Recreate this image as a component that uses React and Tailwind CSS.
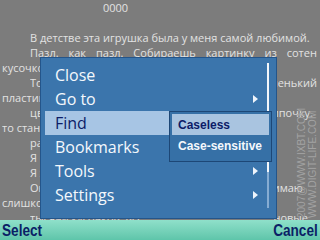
import React from "react";

const lines = [
  { left: "В детстве эта игрушка была у меня самой любимой.", indent: true },
  { words: ["Пазл.", "как", "пазл.", "Собираешь", "картинку", "из", "сотен"] },
  { left: "кусочков, и радуешься, когда всё совпадает." },
  { left: "Тогда мне подарили", right: "маленький", indent: true, pr: "pr-[3px]" },
  { left: "пластинчатый пазл, где все кусочки одного" },
  { left: "цвета, а картинка складывается в", right: "липочку.", indent: true, pr: "pr-[7px]" },
  { left: "то становится понятно, что" },
  { left: "расписывать это нет смысла.", indent: true },
  { left: "Я помню каждую деталь.", indent: true },
  { left: "Я храню его до сих пор.", indent: true },
  { left: "Он не так уж и прост, как я", right: "понимаю", indent: true, pr: "pr-[17px]" },
  { left: "слишком много деталей и" },
  { left: "тысячи кусочков, все", right: "новые", indent: true, pr: "pr-[12px]" },
];

const menuItems = [
  { label: "Close" },
  { label: "Go to", sub: true },
  { label: "Find", active: true },
  { label: "Bookmarks" },
  { label: "Tools", sub: true },
  { label: "Settings", sub: true },
];

const Arrow = () => (
  <svg width="5" height="8" viewBox="0 0 5 8">
    <path d="M0 0 L5 4 L0 8 Z" fill="#eef4fb" />
  </svg>
);

const TextLine = ({ line }) => {
  if (line.words) {
    return (
      <div className="flex justify-between whitespace-nowrap pl-[30px] pr-[3px]">
        {line.words.map((w) => (
          <span key={w}>{w}</span>
        ))}
      </div>
    );
  }
  return (
    <div
      className={`flex justify-between whitespace-nowrap ${
        line.indent ? "pl-[30px]" : "pl-[2px]"
      } ${line.pr || ""}`}
    >
      <span className="min-w-0 overflow-hidden">{line.left}</span>
      {line.right && <span className="shrink-0">{line.right}</span>}
    </div>
  );
};

export default function App() {
  return (
    <div className="relative flex h-[240px] w-[320px] flex-col overflow-hidden bg-[#7c7c7c] font-['Open_Sans',sans-serif]">
      {/* page text */}
      <div className="h-[220px] overflow-hidden text-[11px] leading-[15px] text-[#e2e2e2]">
        <div className="pl-[103px]">0000</div>
        <div className="h-[15px]" />
        {lines.map((line, i) => (
          <TextLine key={i} line={line} />
        ))}
      </div>

      {/* softkeys */}
      <div className="flex h-[20px] items-center justify-between bg-gradient-to-b from-[#8fe0ca] to-[#5ec5aa] px-[2px] font-['Liberation_Sans',sans-serif] text-[17px] font-bold leading-none text-[#0b1f66]">
        <span className="inline-block origin-left scale-x-[0.8]">Select</span>
        <span className="inline-block origin-right scale-x-[0.8]">Cancel</span>
      </div>

      {/* watermark */}
      <div className="absolute left-[297px] top-[96px] flex h-[122px] flex-col gap-[1px] whitespace-nowrap font-['Liberation_Sans',sans-serif] text-[10px] leading-[10px] text-[#a2a2a2] [writing-mode:vertical-rl] rotate-180">
        <span>2007@WWW.IXBT.COM</span>
        <span>WWW.DIGIT-LIFE.COM</span>
      </div>

      {/* options menu */}
      <div className="absolute left-[40px] top-[57px] h-[162px] w-[237px] border border-[#24558a] bg-[#3b75ac] pt-[5px]">
        {menuItems.map((item) => (
          <div
            key={item.label}
            className={`ml-[4px] mr-[13px] flex h-[24px] items-center justify-between pl-[10px] pr-[5px] text-[16px] font-medium ${
              item.active ? "bg-[#a7c5e4] text-[#0c1c68]" : "text-[#f4f8fc]"
            }`}
          >
            <span>{item.label}</span>
            {item.sub && <Arrow />}
          </div>
        ))}

        {/* scrollbar */}
        <div className="absolute left-[226px] top-[5px] h-[145px] w-[2px] bg-[#86acd2]">
          <div className="h-[109px] w-[2px] bg-[#f2f6fa]" />
        </div>

        {/* find submenu */}
        <div className="absolute left-[128px] top-[53px] h-[51px] w-[103px] border border-[#1d4776] bg-[#3670a6] p-[2px] font-['Liberation_Sans',sans-serif] text-[12px] font-bold">
          <div className="flex h-[21px] items-center bg-[#a9c4e0] pl-[6px] text-[#0c1c68]">
            Caseless
          </div>
          <div className="flex h-[21px] items-center pl-[6px] text-[#f4f8fc]">
            Case-sensitive
          </div>
        </div>
      </div>
    </div>
  );
}
